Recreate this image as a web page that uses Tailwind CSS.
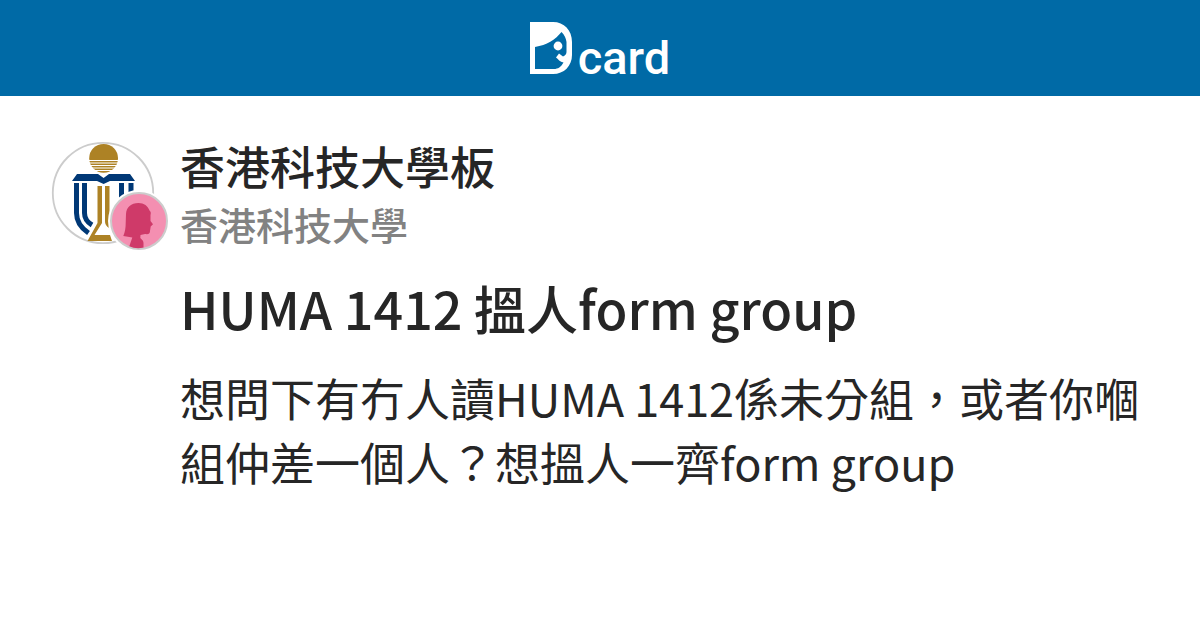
<!DOCTYPE html>
<html lang="zh-Hant">
<head>
  <meta charset="UTF-8">
  <meta name="viewport" content="width=device-width, initial-scale=1.0">
  <title>HUMA 1412 搵人form group - Dcard</title>
  <script src="https://cdn.jsdelivr.net/npm/@tailwindcss/browser@4"></script>
</head>
<body class="bg-white text-[#262626] font-['Noto_Sans_CJK_TC',sans-serif]">
  <header class="bg-[#006aa6] h-24 flex items-center justify-center">
    <a href="/" class="flex items-end text-white" aria-label="Dcard">
      <svg class="w-[42px] h-[52px]" viewBox="0 0 42 52" fill="currentColor" aria-hidden="true">
        <path fill-rule="evenodd" d="M0 0H23C34 0 42 8 42 20V33C42 44 34 52 23 52H0ZM5 25V47H24C28 47 31 45 33.500 40.500C30 40 28 37 26 35.500L29 31.500L33 34.500C35 34 36.500 32 36.500 30V20C36 16 34.500 13 31.500 10C25 18 17 23 5 25Z"/>
        <circle cx="28" cy="24" r="4.400"/>
      </svg>
      <span class="ml-1.5 h-[52px] text-[47px] leading-[72px] font-medium font-[Roboto,sans-serif]">card</span>
    </a>
  </header>

  <main class="flex gap-[25px] pl-[51px] pr-12 pt-11">
    <!-- school badge + author gender -->
    <div class="relative shrink-0 mt-px w-[104px] h-[104px]">
      <svg class="w-full h-full" viewBox="0 0 104 104" aria-hidden="true">
        <circle cx="52" cy="52" r="50.200" fill="#fff" stroke="#ccc" stroke-width="1.800"/>
        <circle cx="52.600" cy="17.300" r="14.400" fill="#ad8225"/>
        <path d="M38 19.500H67M38 22H67M38 24.500H67M38 27H67M38 29.500H67" stroke="#fff" stroke-width="1.100"/>
        <path d="M26 33H47L52.600 37L58 33H79L84 40H59L52.600 43L46 40H21Z" fill="#003876"/>
        <g fill="none" stroke="#003876" stroke-width="5">
          <path d="M25.500 42V72C25.500 81 30 87 37.500 92M33.500 42V72C33.500 78 36 81 41 84"/>
          <path d="M70.500 42V60M80 42V60"/>
        </g>
        <path d="M46.500 45H51V82L43.500 94H59L61 100H36.500L46.500 82ZM54 45H58.500V80L60 88C56 86 54 84 54 80Z" fill="#ad8225"/>
      </svg>
      <svg class="absolute left-[57px] top-[49px] w-[62px] h-[62px]" viewBox="0 0 62 62" aria-hidden="true">
        <circle cx="31" cy="31" r="31" fill="#fff"/>
        <circle cx="31" cy="31" r="28" fill="#f48fb1" stroke="#ccc" stroke-width="2"/>
        <path d="M15.300 46C17 42 17.700 38 17.700 33L18 24C18.500 17 23 13 30.500 13C36 13 40 16 41.500 20.500C43 21.500 43 23.500 42.500 25V31L45 34.300L42.700 36.500L42 41C42 43.500 41 44.500 37 44L32.500 45L32.300 48C34 49.500 35.500 51 35.500 53V57.600Q28 59.500 21.300 56.200L24.300 47.500Z" fill="#cf3a69"/>
      </svg>
    </div>

    <article class="min-w-0">
      <div class="text-[45px] leading-[52px] font-medium">香港科技大學板</div>
      <div class="mt-2.5 text-[38px] leading-[44px] font-medium text-[#828282]">香港科技大學</div>
      <h1 class="mt-[30px] text-[52px] leading-[64px] font-medium">HUMA 1412 搵人form group</h1>
      <p class="mt-[26px] text-[45px] leading-[64px]">想問下有冇人讀HUMA 1412係未分組，或者你嗰組仲差一個人？想搵人一齊form group</p>
    </article>
  </main>
</body>
</html>
